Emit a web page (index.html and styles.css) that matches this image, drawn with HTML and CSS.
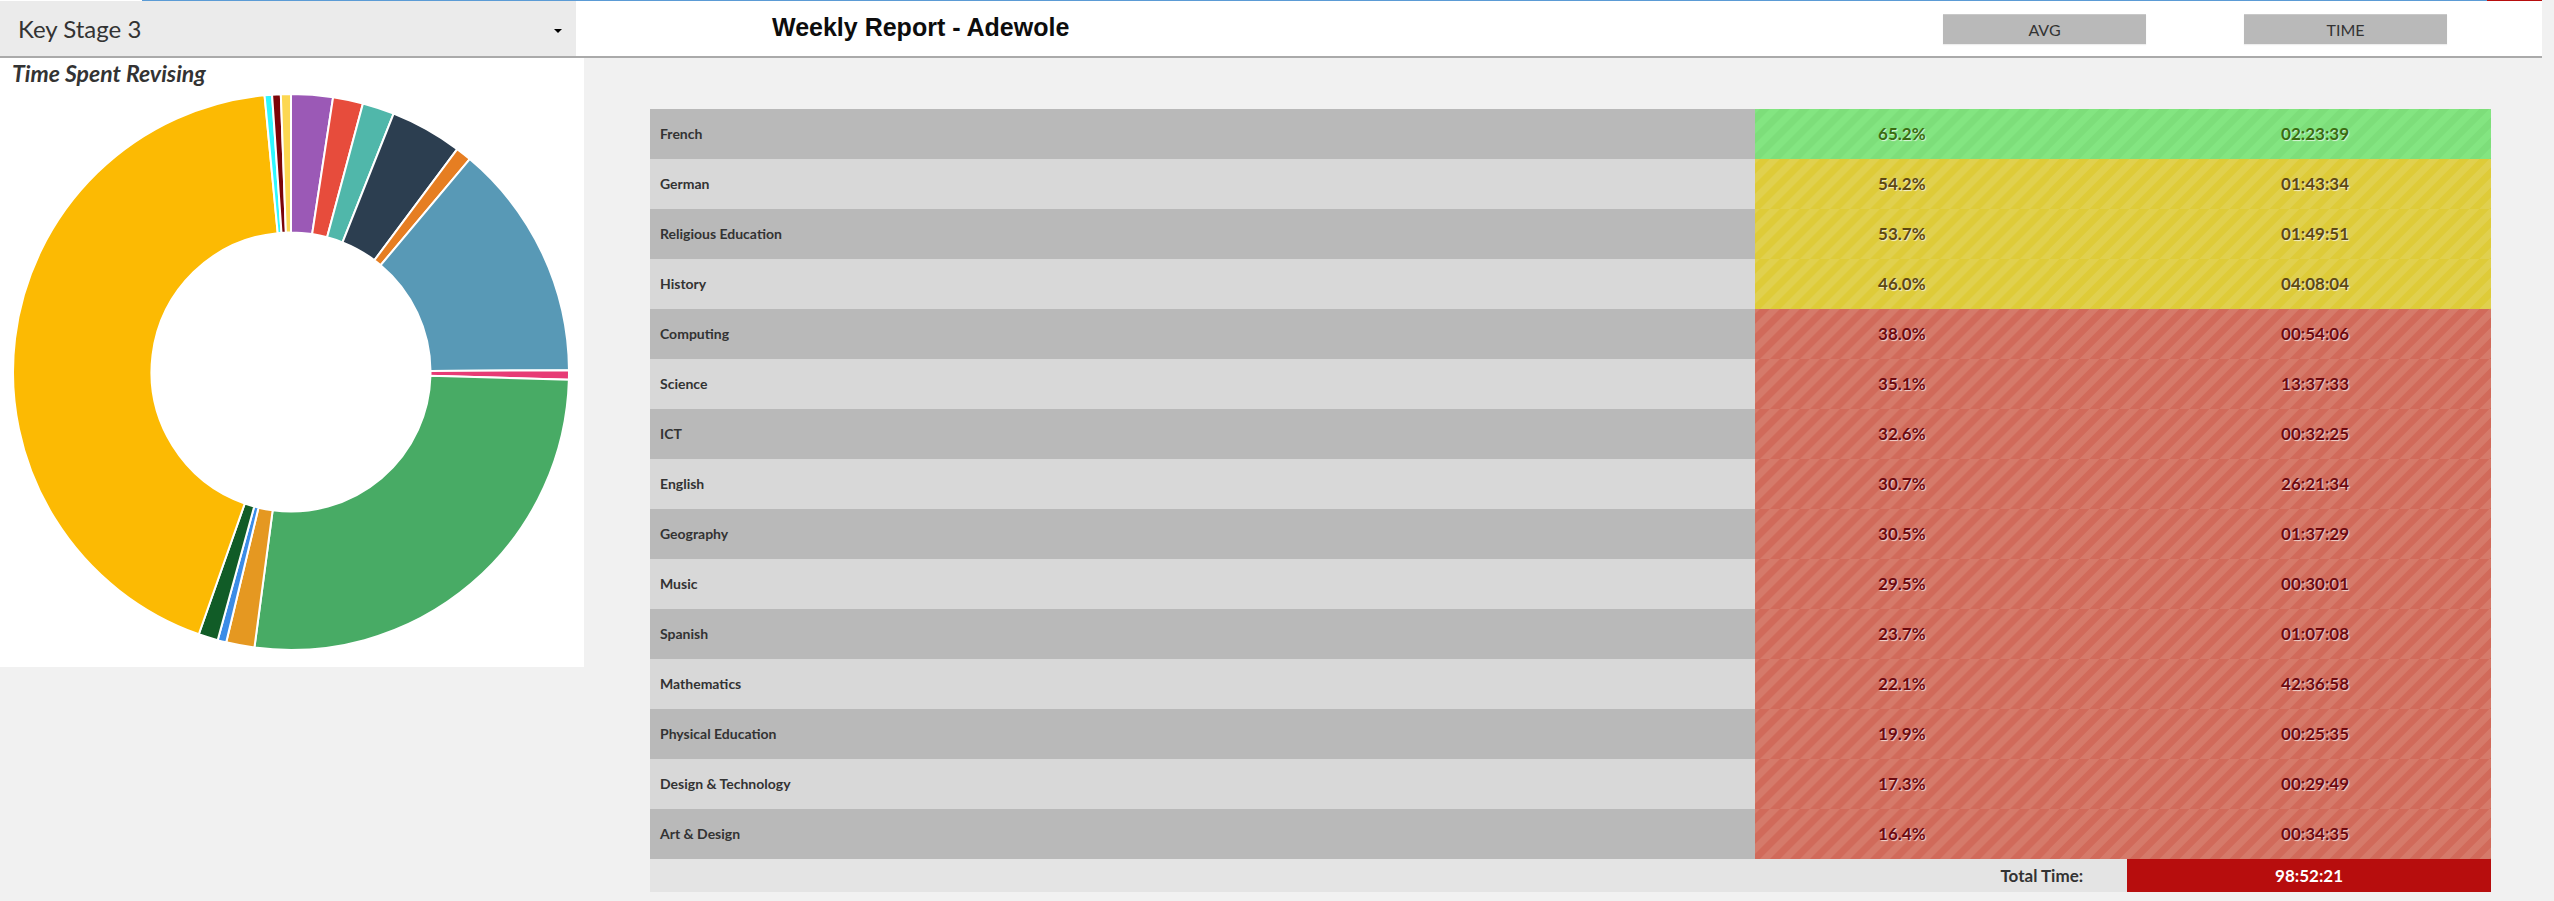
FILE: index.html
```html
<!DOCTYPE html>
<html lang="en">
<head>
<meta charset="utf-8">
<title>Weekly Report - Adewole</title>
<link rel="stylesheet" href="styles.css">
</head>
<body>
<div class="page">
  <header class="topbar">
    <div class="picker">
      <select class="picker-select" aria-label="Key stage"><option>Key Stage 3</option></select>
    </div>
    <h1 class="report-title">Weekly Report - Adewole</h1>
    <button type="button" class="sort">AVG</button>
    <button type="button" class="sort">TIME</button>
  </header>
  <main class="content">
    <section class="card">
      <h2 class="card-title">Time Spent Revising</h2>
      <svg id="donut" class="donut" viewBox="-278 -278 556 556" role="img" aria-label="Time spent revising by subject"></svg>
    </section>
    <div class="results-wrap">
      <table class="results">
        <colgroup><col class="col-name"><col class="col-avg"><col class="col-gap"><col class="col-time"></colgroup>
        <tbody>
          <tr class="good"><th scope="row">French</th><td>65.2%</td><td colspan="2" class="time">02:23:39</td></tr>
          <tr class="fair"><th scope="row">German</th><td>54.2%</td><td colspan="2" class="time">01:43:34</td></tr>
          <tr class="fair"><th scope="row">Religious Education</th><td>53.7%</td><td colspan="2" class="time">01:49:51</td></tr>
          <tr class="fair"><th scope="row">History</th><td>46.0%</td><td colspan="2" class="time">04:08:04</td></tr>
          <tr class="poor"><th scope="row">Computing</th><td>38.0%</td><td colspan="2" class="time">00:54:06</td></tr>
          <tr class="poor"><th scope="row">Science</th><td>35.1%</td><td colspan="2" class="time">13:37:33</td></tr>
          <tr class="poor"><th scope="row">ICT</th><td>32.6%</td><td colspan="2" class="time">00:32:25</td></tr>
          <tr class="poor"><th scope="row">English</th><td>30.7%</td><td colspan="2" class="time">26:21:34</td></tr>
          <tr class="poor"><th scope="row">Geography</th><td>30.5%</td><td colspan="2" class="time">01:37:29</td></tr>
          <tr class="poor"><th scope="row">Music</th><td>29.5%</td><td colspan="2" class="time">00:30:01</td></tr>
          <tr class="poor"><th scope="row">Spanish</th><td>23.7%</td><td colspan="2" class="time">01:07:08</td></tr>
          <tr class="poor"><th scope="row">Mathematics</th><td>22.1%</td><td colspan="2" class="time">42:36:58</td></tr>
          <tr class="poor"><th scope="row">Physical Education</th><td>19.9%</td><td colspan="2" class="time">00:25:35</td></tr>
          <tr class="poor"><th scope="row">Design &amp; Technology</th><td>17.3%</td><td colspan="2" class="time">00:29:49</td></tr>
          <tr class="poor"><th scope="row">Art &amp; Design</th><td>16.4%</td><td colspan="2" class="time">00:34:35</td></tr>
        </tbody>
        <tfoot>
          <tr><th scope="row" colspan="3" class="total-label">Total Time:</th><td class="total-value">98:52:21</td></tr>
        </tfoot>
      </table>
    </div>
  </main>
</div>
<script src="report.js"></script>
</body>
</html>
```
FILE: styles.css
```css
* { box-sizing: border-box; }

body {
  margin: 0;
  background: #f1f1f1;
  color: #333;
  font-family: Lato, "Open Sans", sans-serif;
}

.page { margin-right: 12px; }

/* Top bar */
.topbar {
  display: flex;
  align-items: center;
  height: 58px;
  padding-right: 95px;
  background: linear-gradient(90deg, #fff 142px, #5b9bd5 142px, #5b9bd5 calc(100% - 55px), #b70d0d calc(100% - 55px)) top / 100% 1px no-repeat #fff;
  border-bottom: 2px solid #aaa;
}

.picker {
  position: relative;
  align-self: stretch;
  width: 576px;
  padding-top: 1px;
}

.picker::after {
  content: "";
  position: absolute;
  right: 14px;
  top: 29px;
  border: 4px solid transparent;
  border-top-color: #000;
  border-bottom: 0;
}

.picker-select {
  appearance: none;
  width: 100%;
  height: 100%;
  padding: 0 18px;
  border: 0;
  border-radius: 0;
  background: #ebebeb;
  color: #333;
  font: 24px Lato, sans-serif;
}

.report-title {
  flex: 1;
  margin: 0;
  padding: 0 0 2px 196px;
  color: #0d0d0d;
  font: bold 25px "Liberation Sans", sans-serif;
}

.sort {
  width: 203px;
  height: 30px;
  margin: 2px 0 0 98px;
  padding: 0;
  border: 0;
  border-top: 1px solid #c8c8c8;
  background: #b9b9b9;
  box-shadow: 0 1px 1px #eee;
  color: #333;
  font: 16px Lato, sans-serif;
}

/* Chart card */
.content {
  display: flex;
  align-items: flex-start;
}

.card {
  flex: none;
  width: 584px;
  padding: 0 14px 16px 12px;
  background: #fff;
}

.card-title {
  margin: 0;
  font-size: 23px;
  line-height: 30px;
  font-style: italic;
}

.donut {
  display: block;
  width: 100%;
  margin-top: 5px;
}

.donut path {
  stroke: #fff;
  stroke-width: 2;
}

/* Results table */
.results-wrap {
  flex: 1;
  padding: 51px 51px 9px 66px;
}

.results {
  width: 100%;
  border-collapse: collapse;
  table-layout: fixed;
}

.col-name { width: 60%; }
.col-avg { width: 16%; }
.col-gap { width: 78px; }

.results th,
.results td {
  padding: 0;
  text-align: center;
}

.results tbody tr {
  height: 50px;
  background:
    linear-gradient(135deg, var(--light) 25%, var(--dark) 25% 50%, var(--light) 50% 75%, var(--dark) 75%)
    0 0 / 20px 20px;
}

.good { --light: #83e581; --dark: #7dde7a; color: #3a6b12; }
.fair { --light: #e0d04e; --dark: #decb38; color: #5d4814; }
.poor { --light: #d57a6a; --dark: #d16a5a; color: #6b0a10; }

.results tbody th {
  padding: 0 0 2px 10px;
  background: #d8d8d8;
  color: #333;
  font-size: 14px;
  text-align: left;
}

.results tbody tr:nth-child(odd) th { background: #b9b9b9; }

.results tbody td {
  padding-bottom: 2px;
  font-size: 17px;
  font-weight: bold;
  text-shadow: 1px 1px 1px rgba(255, 255, 255, 0.7);
}

.results tbody .time { padding-left: 90px; }

.results tfoot tr {
  height: 33px;
  background: #e4e4e4;
  font-size: 17px;
}

.results tfoot .total-label {
  padding-right: 44px;
  text-align: right;
}

.results .total-value {
  background: #b70d0d;
  color: #fff;
  font-weight: bold;
}
```
FILE: report.js
```javascript
const colours = [
  "#9b59b6", "#e74c3c", "#50b7aa", "#2c3e50", "#e67e22",
  "#5899b6", "#e73b75", "#48ab65", "#e59821", "#3c8ce7",
  "#115c27", "#fcba03", "#2ef8ff", "#7b0509", "#fcd752"
];
const OUTER = 277;
const INNER = 139;
const times = [...document.querySelectorAll(".time")].map((cell) => {
  const [h, m, s] = cell.textContent.split(":").map(Number);
  return h * 3600 + m * 60 + s;
});
const total = times.reduce((sum, t) => sum + t, 0);
const point = (radius, angle) => `${radius * Math.sin(angle)} ${-radius * Math.cos(angle)}`;

let start = 0;
times.forEach((time, i) => {
  const end = start + (time / total) * 2 * Math.PI;
  const large = end - start > Math.PI ? 1 : 0;
  const slice = document.createElementNS("http://www.w3.org/2000/svg", "path");
  slice.setAttribute("fill", colours[i]);
  slice.setAttribute("d",
    `M${point(OUTER, start)}A${OUTER} ${OUTER} 0 ${large} 1 ${point(OUTER, end)}` +
    `L${point(INNER, end)}A${INNER} ${INNER} 0 ${large} 0 ${point(INNER, start)}Z`);
  document.getElementById("donut").append(slice);
  start = end;
});
```
